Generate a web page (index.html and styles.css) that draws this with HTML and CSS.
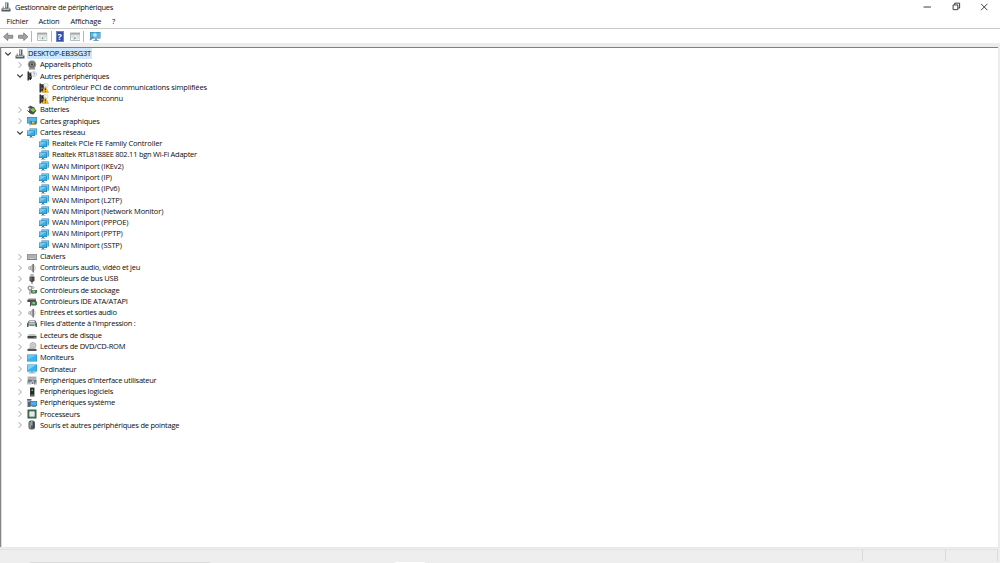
FILE: index.html
```html
<!DOCTYPE html>
<html lang="fr">
<head>
<meta charset="utf-8">
<title>Gestionnaire de périphériques</title>
<link rel="stylesheet" href="styles.css">
</head>
<body>
<svg class="defs" aria-hidden="true">
<symbol id="open" viewBox="0 0 8 8"><path d="M1.3 2.5 4 5.2 6.7 2.5" fill="none" stroke="#404040" stroke-width="1.1"/></symbol>
<symbol id="closed" viewBox="0 0 8 8"><path d="M2.6 1.2 5.4 4 2.6 6.8" fill="none" stroke="#a0a0a0" stroke-width="1"/></symbol>
<symbol id="pc" viewBox="0 0 20 20"><path d="M8 1h7v12H8z" fill="#62676b"/><path d="M9 2h3v9H9z" fill="#c8d1d4"/><path d="M3 9h3v6H3z" fill="#9eacb4"/><path d="M1 13h18v6H1z" fill="#555d64"/><path d="M3 14h13v2H3z" fill="#b6bec3"/><path d="M15 10h2v3h-2z" fill="#aeb6bb"/></symbol>
<symbol id="camera" viewBox="0 0 20 20"><path d="M5 15h10l2 4H3z" fill="#888"/><circle cx="10" cy="9" r="8.5" fill="#9b9b9b"/><circle cx="10" cy="9" r="6.2" fill="#5e5e5e"/><circle cx="10" cy="9" r="4" fill="#aaa"/><circle cx="10" cy="9" r="2.4" fill="#444"/></symbol>
<symbol id="other" viewBox="0 0 20 20"><path d="M1 1h3v18H1z" fill="#333"/><path d="M4 3h6v13H4z" fill="#606660"/><path d="M5 5h4v5H5zM5 12h3v6H5z" fill="#222"/><circle cx="14" cy="6" r="5.3" fill="#f5f7fa" stroke="#b6c1cc"/><path d="M12.3 4.5q1.8-2.5 3.4 0 0 1.5-1.7 2v1" fill="none" stroke="#4f7da5" stroke-width="1.3"/><path d="M13.3 8.5h1.4v1h-1.4z" fill="#4f7da5"/></symbol>
<symbol id="warn" viewBox="0 0 20 20"><path d="M1 1h3v18H1z" fill="#333"/><path d="M4 2h6v14H4z" fill="#606660"/><path d="M5 4h4v5H5zM5 12h3v6H5z" fill="#222"/><circle cx="14" cy="5" r="4.5" fill="#eef2f6" stroke="#b6c1cc"/><path d="m12.5 7 6.8 12H5.8z" fill="#fbb829" stroke="#d9901a"/><path d="M11.7 10.5h1.7v4h-1.7zm0 5.3h1.7v1.7h-1.7z" fill="#231b08"/></symbol>
<symbol id="battery" viewBox="0 0 20 20"><path d="m1 5 6-4 10 5-7 6z" fill="#889187"/><path d="m3 4 4-2 8 4-4 3z" fill="#3f4943"/><path d="m4 9 8-4 7 6-6 8-9-4z" fill="#3f5b3c"/><path d="m6 9 6-3 5 5-5 3z" fill="#8fc358"/><path d="m1 11 5 5 5 2" fill="none" stroke="#444" stroke-width="2"/></symbol>
<symbol id="gpu" viewBox="0 0 20 20"><path d="M0 2h20v13H0z" fill="#287dab"/><path d="M1 3h18v11H1z" fill="#55b9ea"/><path d="M7 10h12v6H7z" fill="#4e8060"/><path d="M10 11h5v4h-5z" fill="#bac7ba"/><path d="M8 16h10v2H8z" fill="#c2a447"/><path d="M5 9h2v10H5z" fill="#737c80"/></symbol>
<symbol id="net" viewBox="0 0 20 20"><path d="M5 1h15v12H5z" fill="#247fae"/><path d="M6 2h13v10H6z" fill="#69c9ed"/><path d="M0 5h16v11H0z" fill="#2777a2"/><path d="M1 6h14v9H1z" fill="#39aee6"/><path d="M1 6h14L1 14z" fill="#70cbf2"/><path d="M6 16h4v2H6z" fill="#4b7d96"/><path d="M4 18h9v1H4z" fill="#5d8da2"/></symbol>
<symbol id="keyboard" viewBox="0 0 20 20"><path d="M0 4h20v12H0z" fill="#7c8286"/><path d="M1 5h18v9H1z" fill="#b1b6ba"/><path d="M3 7h14M3 10h14" stroke="#8e9498" stroke-dasharray="1 1"/><path d="M5 12h10v1H5z" fill="#ddd"/></symbol>
<symbol id="sound" viewBox="0 0 20 20"><path d="M3 7h4l6-6v18l-6-6H3z" fill="#8d8d8d"/><path d="M4 8h3v4H4z" fill="#ccc"/><path d="m8 7 3-3v12l-3-3z" fill="#c5c5c5"/><path d="M12.5 2v17" stroke="#5d5d5d" stroke-width="2"/><path d="M15 5q3 5 0 10" fill="none" stroke="#aaa" stroke-width="1.5"/></symbol>
<symbol id="usb" viewBox="0 0 20 20"><path d="M7 0h6v5H7z" fill="#999"/><path d="M8 1h1v3H8zm3 0h1v3h-1z" fill="#eee"/><path d="M5 5h10v8l-3 3H8l-3-3z" fill="#484848"/><path d="M7 6h2v7H7z" fill="#777"/><path d="M9 15h2v5H9z" fill="#555"/></symbol>
<symbol id="storage" viewBox="0 0 20 20"><circle cx="6" cy="6" r="4" fill="#eee" stroke="#71777a" stroke-width="2"/><circle cx="12" cy="5" r="2" fill="none" stroke="#92989a" stroke-width="1.5"/><path d="M8 10h12v6H8z" fill="#447a51"/><path d="M11 11h5v4h-5z" fill="#a5bca0"/><path d="M5 10h2v9H5z" fill="#6c7476"/><path d="M9 16h9v2H9z" fill="#c2a447"/></symbol>
<symbol id="ide" viewBox="0 0 20 20"><path d="M1 5l3-2h14v7H1z" fill="#888"/><path d="M1 6h17v4H1z" fill="#4c4c4c"/><path d="M8 9h12v7H8z" fill="#447a51"/><path d="M11 10h5v4h-5z" fill="#9cb899"/><path d="M6 9h2v10H6z" fill="#555"/><path d="M9 16h9v2H9z" fill="#bda64d"/></symbol>
<symbol id="printer" viewBox="0 0 20 20"><path d="M4 3h13l3 7H0z" fill="#596167"/><path d="M5 4h10l1 3H4z" fill="#dce8ef"/><path d="M0 9h20v5H0z" fill="#4f575c"/><path d="M3 8h14v2H3z" fill="#b9c2c5"/><path d="M4 11h12l2 5H2z" fill="#e8f5f5"/><path d="M5 12h10v2H5z" fill="#4ba28c"/><path d="M0 14h3v2H0zm17 0h3v2h-3z" fill="#596167"/></symbol>
<symbol id="disk" viewBox="0 0 20 20"><path d="M4 8h12l3 4H1z" fill="#c4c4c4"/><path d="M1 12h18v5H1z" fill="#444"/><path d="M14 14h3v1h-3z" fill="#abd8a0"/></symbol>
<symbol id="dvd" viewBox="0 0 20 20"><circle cx="12" cy="7" r="6" fill="#d4d6d7" stroke="#999" stroke-width="1.4"/><circle cx="12" cy="7" r="2" fill="#fff" stroke="#888"/><path d="M4 11h11l4 4H1z" fill="#bbb"/><path d="M1 14h18v4H1z" fill="#555"/></symbol>
<symbol id="monitor" viewBox="0 0 20 20"><path d="M0 3h20v14H0z" fill="#2785b9"/><path d="M1 4h18v12H1z" fill="#3eb2ec"/><path d="M1 4h17L1 14z" fill="#65c7f4"/></symbol>
<symbol id="computer" viewBox="0 0 20 20"><path d="M0 1h20v14H0z" fill="#2785b9"/><path d="M1 2h18v12H1z" fill="#3eb2ec"/><path d="M1 2h16L1 13z" fill="#7dd3f8"/><path d="M8 15h4v2H8z" fill="#6d9db7"/><path d="M3 17h14v1.5H3z" fill="#668fa5"/></symbol>
<symbol id="hid" viewBox="0 0 20 20"><path d="M1 3h18v8H1z" fill="#b2b8bc"/><path d="M3 5h14M3 8h14" stroke="#8a9095" stroke-dasharray="2 1"/><path d="M1 12q0-3 3-3h3v10H5v-4H3v4H1zM9 10h4v8H9zm5 0h5v9h-2v-4h-1v4h-2z" fill="#757b82"/><path d="M5 10h8v3H5z" fill="#666c73"/><path d="M10 11h2v3h-2z" fill="#ccd1d5"/></symbol>
<symbol id="software" viewBox="0 0 20 20"><path d="M6 1h9v18H6z" fill="#484848"/><path d="M7 2h7v12H7z" fill="#292929"/><path d="M9 5h3v3H9z" fill="#83bc77"/><path d="M7 16h7v1H7z" fill="#888"/></symbol>
<symbol id="system" viewBox="0 0 20 20"><path d="M0 2h9v3H0z" fill="#536d7c"/><path d="M6 6h14v10H6z" fill="#2178a8"/><path d="M7 7h12v8H7z" fill="#49b1e7"/><path d="M1 5h6v13H1z" fill="#526573"/><path d="M3 6h2v2H3z" fill="#d3e1e7"/><path d="M9 16h9v2H9z" fill="#77909c"/></symbol>
<symbol id="cpu" viewBox="0 0 20 20"><path d="M1 1h18v18H1z" fill="#2b5840"/><path d="M3 3h14v14H3z" fill="#547e64"/><path d="M5 5h10v10H5z" fill="#fff"/><path d="M6 6h8v8H6z" fill="#e7ebe7"/></symbol>
<symbol id="mouse" viewBox="0 0 20 20"><rect x="3" y="1" width="13" height="18" rx="5" fill="#555c61"/><path d="M5 4h3v13H5z" fill="#8d989f"/><path d="M9 2h1.5v9H9z" fill="#e0e5e8"/><path d="M12 4h2v12h-2z" fill="#3d4449"/></symbol>
<symbol id="arrow" viewBox="0 0 22 20"><path d="M1 10 10 2v5h11v6H10v5z" fill="#a2a2a2" stroke="#747474" stroke-width="1.6"/></symbol>
<symbol id="pane" viewBox="0 0 22 20"><path d="M1 2h20v16H1z" fill="#fff" stroke="#929a9e" stroke-width="1.4"/><path d="M1 2h20v4H1z" fill="#a4abaf"/><path d="M2 8h18M7 8v10M15 8v10" stroke="#b2b8bb"/><path d="M3 10h3M3 13h3M16 10h3M16 13h3" stroke="#9ca3a8"/><path d="m13 9-4 4 4 4z" fill="#66a872"/></symbol>
<symbol id="pane2" viewBox="0 0 22 20"><path d="M1 2h20v16H1z" fill="#fff" stroke="#929a9e" stroke-width="1.4"/><path d="M1 2h20v4H1z" fill="#a4abaf"/><path d="M2 8h18M7 8v10M15 8v10" stroke="#b2b8bb"/><path d="M3 10h3M3 13h3M16 10h3M16 13h3" stroke="#9ca3a8"/><path d="m9 9 4 4-4 4z" fill="#66a872"/></symbol>
<symbol id="scan" viewBox="0 0 24 22"><path d="M2 2h21v13H2z" fill="#287eae"/><path d="M3 3h19v11H3z" fill="#55b9e8"/><circle cx="12" cy="8" r="4.5" fill="#b9e9fb" stroke="#6aa5c4" stroke-width="1.3"/><path d="m8 12-6 6" stroke="#4987a7" stroke-width="2.4"/><path d="M12 15h4v3h-4zm-3 3h10v2H9z" fill="#779cae"/></symbol>
</svg>
<div class="window">
<header class="titlebar">
<svg class="app-icon"><use href="#pc"/></svg><h1 class="title">Gestionnaire de périphériques</h1>
<div class="controls">
<svg viewBox="0 0 10 10"><path d="M1.5 5.5h7" /></svg>
<svg viewBox="0 0 10 10"><path d="M2 3.5h4.5v4.5H2zM3.5 3.3V1.8h4.7v4.7H6.7"/></svg>
<svg viewBox="0 0 10 10"><path d="m2 2.5 6 6M8 2.5l-6 6"/></svg>
</div>
</header>
<nav class="menu"><span class="m1">Fichier</span><span class="m2">Action</span><span class="m3">Affichage</span><span>?</span></nav>
<div class="toolbar">
<svg class="tool"><use href="#arrow"/></svg><svg class="tool forward"><use href="#arrow"/></svg><i class="rule"></i>
<svg class="tool pane"><use href="#pane"/></svg><i class="rule"></i>
<span class="help">?</span><svg class="tool pane2"><use href="#pane2"/></svg><i class="rule"></i>
<svg class="tool scan"><use href="#scan"/></svg>
</div>
<main class="tree">
<div class="row root"><svg class="chev"><use href="#open"/></svg><svg class="ico"><use href="#pc"/></svg><span class="label selected">DESKTOP-EB3SG3T</span></div>
<div class="row"><svg class="chev"><use href="#closed"/></svg><svg class="ico"><use href="#camera"/></svg><span class="label">Appareils photo</span></div>
<div class="row"><svg class="chev"><use href="#open"/></svg><svg class="ico"><use href="#other"/></svg><span class="label">Autres périphériques</span></div>
<div class="row leaf"><svg class="ico"><use href="#warn"/></svg><span class="label">Contrôleur PCI de communications simplifiées</span></div>
<div class="row leaf tight"><svg class="ico"><use href="#warn"/></svg><span class="label">Périphérique inconnu</span></div>
<div class="row"><svg class="chev"><use href="#closed"/></svg><svg class="ico"><use href="#battery"/></svg><span class="label">Batteries</span></div>
<div class="row"><svg class="chev"><use href="#closed"/></svg><svg class="ico"><use href="#gpu"/></svg><span class="label">Cartes graphiques</span></div>
<div class="row"><svg class="chev"><use href="#open"/></svg><svg class="ico"><use href="#net"/></svg><span class="label">Cartes réseau</span></div>
<div class="row leaf"><svg class="ico"><use href="#net"/></svg><span class="label">Realtek PCIe FE Family Controller</span></div>
<div class="row leaf tight"><svg class="ico"><use href="#net"/></svg><span class="label">Realtek RTL8188EE 802.11 bgn Wi-Fi Adapter</span></div>
<div class="row leaf"><svg class="ico"><use href="#net"/></svg><span class="label">WAN Miniport (IKEv2)</span></div>
<div class="row leaf"><svg class="ico"><use href="#net"/></svg><span class="label">WAN Miniport (IP)</span></div>
<div class="row leaf"><svg class="ico"><use href="#net"/></svg><span class="label">WAN Miniport (IPv6)</span></div>
<div class="row leaf"><svg class="ico"><use href="#net"/></svg><span class="label">WAN Miniport (L2TP)</span></div>
<div class="row leaf"><svg class="ico"><use href="#net"/></svg><span class="label">WAN Miniport (Network Monitor)</span></div>
<div class="row leaf"><svg class="ico"><use href="#net"/></svg><span class="label">WAN Miniport (PPPOE)</span></div>
<div class="row leaf"><svg class="ico"><use href="#net"/></svg><span class="label">WAN Miniport (PPTP)</span></div>
<div class="row leaf"><svg class="ico"><use href="#net"/></svg><span class="label">WAN Miniport (SSTP)</span></div>
<div class="row"><svg class="chev"><use href="#closed"/></svg><svg class="ico"><use href="#keyboard"/></svg><span class="label">Claviers</span></div>
<div class="row"><svg class="chev"><use href="#closed"/></svg><svg class="ico"><use href="#sound"/></svg><span class="label">Contrôleurs audio, vidéo et jeu</span></div>
<div class="row"><svg class="chev"><use href="#closed"/></svg><svg class="ico"><use href="#usb"/></svg><span class="label">Contrôleurs de bus USB</span></div>
<div class="row"><svg class="chev"><use href="#closed"/></svg><svg class="ico"><use href="#storage"/></svg><span class="label">Contrôleurs de stockage</span></div>
<div class="row"><svg class="chev"><use href="#closed"/></svg><svg class="ico"><use href="#ide"/></svg><span class="label">Contrôleurs IDE ATA/ATAPI</span></div>
<div class="row"><svg class="chev"><use href="#closed"/></svg><svg class="ico"><use href="#sound"/></svg><span class="label">Entrées et sorties audio</span></div>
<div class="row"><svg class="chev"><use href="#closed"/></svg><svg class="ico"><use href="#printer"/></svg><span class="label">Files d'attente à l'impression :</span></div>
<div class="row"><svg class="chev"><use href="#closed"/></svg><svg class="ico"><use href="#disk"/></svg><span class="label">Lecteurs de disque</span></div>
<div class="row"><svg class="chev"><use href="#closed"/></svg><svg class="ico"><use href="#dvd"/></svg><span class="label">Lecteurs de DVD/CD-ROM</span></div>
<div class="row"><svg class="chev"><use href="#closed"/></svg><svg class="ico"><use href="#monitor"/></svg><span class="label">Moniteurs</span></div>
<div class="row"><svg class="chev"><use href="#closed"/></svg><svg class="ico"><use href="#computer"/></svg><span class="label">Ordinateur</span></div>
<div class="row"><svg class="chev"><use href="#closed"/></svg><svg class="ico"><use href="#hid"/></svg><span class="label">Périphériques d'interface utilisateur</span></div>
<div class="row"><svg class="chev"><use href="#closed"/></svg><svg class="ico"><use href="#software"/></svg><span class="label">Périphériques logiciels</span></div>
<div class="row"><svg class="chev"><use href="#closed"/></svg><svg class="ico"><use href="#system"/></svg><span class="label">Périphériques système</span></div>
<div class="row"><svg class="chev"><use href="#closed"/></svg><svg class="ico"><use href="#cpu"/></svg><span class="label">Processeurs</span></div>
<div class="row"><svg class="chev"><use href="#closed"/></svg><svg class="ico"><use href="#mouse"/></svg><span class="label">Souris et autres périphériques de pointage</span></div>
</main>
<footer class="status"><div class="cells"><i class="main"></i><i class="mid"></i><i class="end"></i></div><div class="edge"><i class="search"></i><i class="task"></i></div></footer>
</div>
</body>
</html>
```
FILE: styles.css
```css
* { box-sizing: border-box; }
body { margin: 0; background: #fff; color: #0c0c0c; font: 7.5px/11.27px "Open Sans", "Noto Sans", sans-serif; letter-spacing: -0.24px; overflow: hidden; }
svg { display: block; flex: none; }
.defs { display: none; }
.window { width: 1000px; height: 563px; display: flex; flex-direction: column; }
.titlebar { height: 14px; display: flex; align-items: center; padding-left: 1px; }
.app-icon { width: 10px; height: 10px; }
.title { margin: 0 0 0 4px; font: inherit; line-height: 14px; letter-spacing: -0.3px; }
.controls { margin-left: auto; margin-right: 10.5px; display: flex; gap: 18px; height: 14px; }
.controls svg { width: 10.5px; height: 11px; margin-top: .5px; fill: none; stroke: #333; stroke-width: .9; }
.menu { height: 14px; display: flex; padding-left: 6.5px; line-height: 14px; letter-spacing: -0.18px; }
.m1 { width: 32px; }
.m2 { width: 32px; }
.m3 { width: 41.5px; }
.toolbar { height: 15px; border-top: 1px solid #c8c8c8; display: flex; align-items: center; padding: 1px 0 0 3px; }
.tool { width: 10.5px; height: 9.5px; }
.forward { margin-left: 4px; transform: scaleX(-1); }
.rule { width: 1px; height: 11px; margin: 0 4px 0 3px; background: #b5b5b5; }
.pane { margin-left: 1px; }
.help { width: 8.5px; height: 10.5px; background: #3550ae; border: 1px solid #7183be; color: #fff; font-size: 9px; font-weight: bold; line-height: 9px; text-align: center; letter-spacing: 0; }
.pane2 { margin-left: 5.5px; }
.scan { width: 12px; height: 11px; margin-left: 1px; }
.tree { flex: 1; min-height: 0; border: solid #ececec; border-width: 4px 2px 0 0; box-shadow: inset 1px 0 #858585, inset 0 1px #808080, inset 2px 0 #dedede; padding-top: 1.1px; }
.row { height: 11.27px; display: flex; align-items: center; padding-left: 16px; white-space: nowrap; }
.root { padding-left: 4px; }
.leaf { padding-left: 39px; letter-spacing: -0.14px; }
.leaf.tight { letter-spacing: -0.25px; }
.chev { width: 8px; height: 8px; margin-right: 3px; }
.ico { width: 10px; height: 10px; }
.label { padding: 0 1px; margin-left: 2px; }
.selected { background: #cce8ff; }
.status { height: 16px; background: #eee; display: flex; flex-direction: column; }
.cells { height: 14px; border-top: 1px solid #e7e7e7; display: flex; padding: 1px 2px 0 0; }
.cells i { border-right: 1px solid #d9d9d9; border-top: 1px solid #e3e3e3; }
.main { width: 863px; }
.mid { width: 83px; }
.end { flex: 1; }
.edge { height: 2px; display: flex; align-items: flex-end; padding-left: 30px; }
.search { width: 180px; height: 1px; background: #dcdcdc; }
.task { width: 30px; height: 1px; margin-left: 185px; background: #fff; }
```
